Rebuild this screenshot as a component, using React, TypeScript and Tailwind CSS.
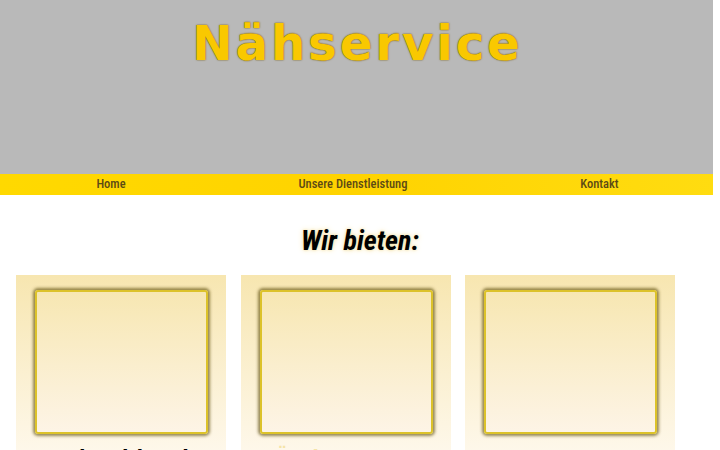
export default function App() {
  const cards = [
    { title: "Schneiderei", color: "text-black" },
    { title: "Änderungen", color: "text-[#f5e4a8]" },
    { title: "Reparaturen", color: "text-[#fffaf2]" },
  ];

  return (
    <div className="w-[720px] h-[450px] overflow-hidden bg-white">
      {/* Header */}
      <header className="w-[713px] h-[174px] bg-[#b9b9b9] flex justify-center pt-[14px]">
        <h1 className="pl-[2px] font-['DejaVu_Sans',sans-serif] font-bold text-[48px] leading-[58px] tracking-[3px] text-[#f9c800] [text-shadow:0_0_1px_#6f5a18,0_0_2px_#8a7430]">
          Nähservice
        </h1>
      </header>

      {/* Nav */}
      <nav className="w-[713px] h-[21px] bg-gradient-to-r from-[#ffd900] via-[#ffd300] to-[#ffdc10] flex items-center justify-around font-['Roboto_Condensed','DejaVu_Sans_Condensed','Liberation_Sans_Narrow',sans-serif] font-medium text-[12.5px] text-[#5c4a16]">
        <span className="pl-[10px]">Home</span>
        <span>Unsere Dienstleistung</span>
        <span className="pr-[8px]">Kontakt</span>
      </nav>

      {/* Content */}
      <main className="pt-[28px]">
        <h2 className="text-center font-['Roboto_Condensed','DejaVu_Sans_Condensed',sans-serif] font-bold italic text-[28px] leading-[36px] text-black [text-shadow:0_0_3px_#f5e0a0,0_0_6px_#f7e8b8]">
          Wir bieten:
        </h2>

        <div className="flex gap-[14.5px] pl-[16px] pt-[16px]">
          {cards.map((c) => (
            <div
              key={c.title}
              className="w-[210px] h-[200px] bg-gradient-to-b from-[#f7e6b0] to-[#fffaf2] px-[19px] pt-[15px]"
            >
              <div className="w-[173px] h-[144px] rounded-[3px] border-2 border-[#dcc22a] bg-gradient-to-b from-[#f7e7b2] to-[#fdf4e6] shadow-[0_0_3px_2px_rgba(95,78,12,0.65)]" />
              <h3
                className={`mt-[9px] text-center font-['DejaVu_Sans',sans-serif] font-bold text-[19px] leading-[28px] tracking-[1px] ${c.color}`}
              >
                {c.title}
              </h3>
            </div>
          ))}
        </div>
      </main>
    </div>
  );
}
